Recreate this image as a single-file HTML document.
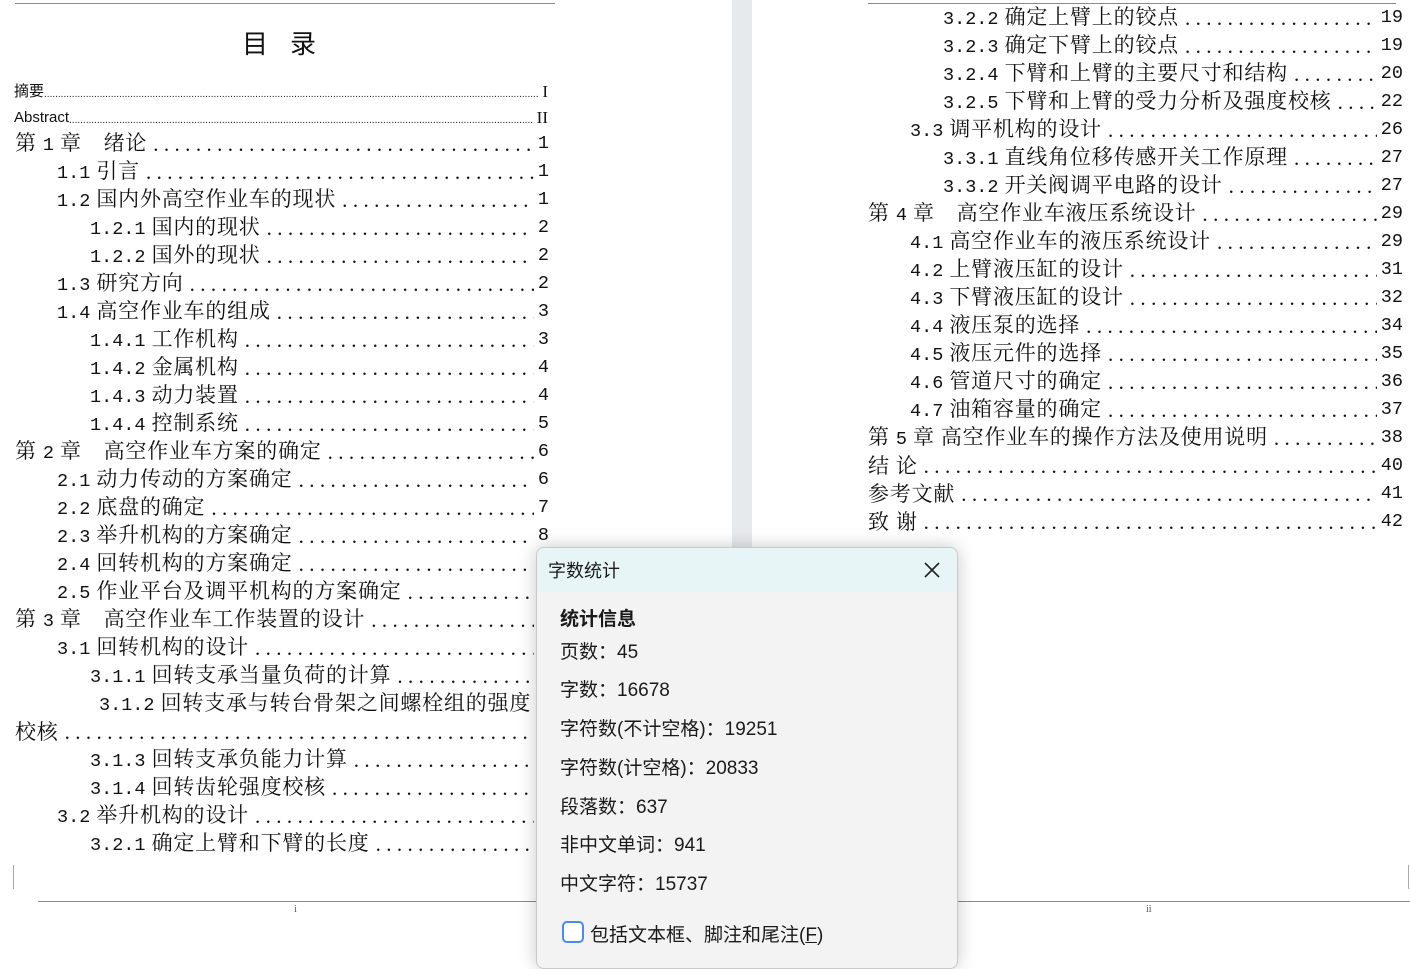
<!DOCTYPE html>
<html><head><meta charset="utf-8">
<style>
html,body{margin:0;padding:0}
body{width:1410px;height:957px;position:relative;overflow:hidden;background:#fff;font-family:"Liberation Serif","Noto Serif CJK SC",serif;color:#111}
.gut{position:absolute;left:732px;top:0;width:20px;height:957px;background:#e7eaed}
.hl{position:absolute;height:1px;background:#8a8a8a}
.r{position:absolute;display:flex;align-items:center;height:28px;font-size:21px;letter-spacing:0.8px;white-space:nowrap;line-height:28px}
.r .d{flex:1;overflow:hidden;letter-spacing:5.4px;padding-left:6px}
.r .n{padding-left:4px;letter-spacing:0;font-family:"Liberation Mono",monospace;font-size:18.5px}
.m{font-family:"Liberation Mono",monospace;font-size:18.5px;letter-spacing:0}
.s{font-family:"Liberation Sans","Noto Sans CJK SC",sans-serif;font-size:15px;letter-spacing:0}
.s .d{letter-spacing:0;font-size:10px;padding-left:0;align-self:flex-end;line-height:22px}
.s .n{font-family:"Liberation Serif",serif;font-size:17px}
.dlg{position:absolute;left:536px;top:547px;width:420px;height:420px;background:#f3f3f3;border:1px solid #c9c9c9;border-radius:8px;box-shadow:0 0 18px rgba(0,0,0,.22);font-family:"Liberation Sans","Noto Sans CJK SC",sans-serif;overflow:hidden}
.hd{height:44px;background:#e8f5f7;position:relative}
.hd span{position:absolute;left:11px;top:9px;font-size:18px;color:#1a1a1a}
.x{position:absolute;left:384px;top:11px;width:22px;height:22px}
.it{position:absolute;left:23px;font-size:19px;color:#1a1a1a}
.cb{position:absolute;left:25px;top:373px;width:18px;height:18px;border:2px solid #4a8af0;border-radius:5px;background:#fff}
</style></head><body>
<div class="gut"></div>
<div class="hl" style="left:15px;top:3px;width:540px"></div>
<div class="hl" style="left:868px;top:3px;width:528px"></div>
<div class="hl" style="left:38px;top:901px;width:498px"></div>
<div class="hl" style="left:958px;top:901px;width:452px"></div>
<div style="position:absolute;left:13px;top:865px;width:1px;height:24px;background:#aaa"></div>
<div style="position:absolute;left:1408px;top:865px;width:1px;height:24px;background:#aaa"></div>
<div style="position:absolute;left:294px;top:904px;font-size:10px;color:#555">i</div>
<div style="position:absolute;left:1146px;top:904px;font-size:10px;color:#555">ii</div>
<div style="position:absolute;left:242px;top:24px;font-size:26px;font-family:'Noto Sans CJK SC',sans-serif;letter-spacing:22px">目录</div>

<div class="r s" style="left:14px;width:534px;top:78px"><span>摘要</span><span class="d">..................................................................................................................................................................................</span><span class="n">I</span></div>
<div class="r s" style="left:14px;width:534px;top:104px"><span>Abstract</span><span class="d">..................................................................................................................................................................................</span><span class="n">II</span></div>

<div class="r" style="left:15px;width:534px;top:130px"><span>第 <span class="m">1</span> 章　绪论</span><span class="d">..............................................................</span><span class="n">1</span></div>
<div class="r" style="left:57px;width:492px;top:158px"><span><span class="m">1.1</span> 引言</span><span class="d">..............................................................</span><span class="n">1</span></div>
<div class="r" style="left:57px;width:492px;top:186px"><span><span class="m">1.2</span> 国内外高空作业车的现状</span><span class="d">..............................................................</span><span class="n">1</span></div>
<div class="r" style="left:90px;width:459px;top:214px"><span><span class="m">1.2.1</span> 国内的现状</span><span class="d">..............................................................</span><span class="n">2</span></div>
<div class="r" style="left:90px;width:459px;top:242px"><span><span class="m">1.2.2</span> 国外的现状</span><span class="d">..............................................................</span><span class="n">2</span></div>
<div class="r" style="left:57px;width:492px;top:270px"><span><span class="m">1.3</span> 研究方向</span><span class="d">..............................................................</span><span class="n">2</span></div>
<div class="r" style="left:57px;width:492px;top:298px"><span><span class="m">1.4</span> 高空作业车的组成</span><span class="d">..............................................................</span><span class="n">3</span></div>
<div class="r" style="left:90px;width:459px;top:326px"><span><span class="m">1.4.1</span> 工作机构</span><span class="d">..............................................................</span><span class="n">3</span></div>
<div class="r" style="left:90px;width:459px;top:354px"><span><span class="m">1.4.2</span> 金属机构</span><span class="d">..............................................................</span><span class="n">4</span></div>
<div class="r" style="left:90px;width:459px;top:382px"><span><span class="m">1.4.3</span> 动力装置</span><span class="d">..............................................................</span><span class="n">4</span></div>
<div class="r" style="left:90px;width:459px;top:410px"><span><span class="m">1.4.4</span> 控制系统</span><span class="d">..............................................................</span><span class="n">5</span></div>
<div class="r" style="left:15px;width:534px;top:438px"><span>第 <span class="m">2</span> 章　高空作业车方案的确定</span><span class="d">..............................................................</span><span class="n">6</span></div>
<div class="r" style="left:57px;width:492px;top:466px"><span><span class="m">2.1</span> 动力传动的方案确定</span><span class="d">..............................................................</span><span class="n">6</span></div>
<div class="r" style="left:57px;width:492px;top:494px"><span><span class="m">2.2</span> 底盘的确定</span><span class="d">..............................................................</span><span class="n">7</span></div>
<div class="r" style="left:57px;width:492px;top:522px"><span><span class="m">2.3</span> 举升机构的方案确定</span><span class="d">..............................................................</span><span class="n">8</span></div>
<div class="r" style="left:57px;width:492px;top:550px"><span><span class="m">2.4</span> 回转机构的方案确定</span><span class="d">..............................................................</span><span class="n">8</span></div>
<div class="r" style="left:57px;width:492px;top:578px"><span><span class="m">2.5</span> 作业平台及调平机构的方案确定</span><span class="d">..............................................................</span><span class="n">9</span></div>
<div class="r" style="left:15px;width:534px;top:606px"><span>第 <span class="m">3</span> 章　高空作业车工作装置的设计</span><span class="d">..............................................................</span><span class="n">1</span></div>
<div class="r" style="left:57px;width:492px;top:634px"><span><span class="m">3.1</span> 回转机构的设计</span><span class="d">..............................................................</span><span class="n">1</span></div>
<div class="r" style="left:90px;width:459px;top:662px"><span><span class="m">3.1.1</span> 回转支承当量负荷的计算</span><span class="d">..............................................................</span><span class="n">1</span></div>
<div class="r" style="left:99px;width:450px;top:690px"><span><span class="m">3.1.2</span> 回转支承与转台骨架之间螺栓组的强度</span></div>
<div class="r" style="left:15px;width:534px;top:718px"><span>校核</span><span class="d">..............................................................</span><span class="n">1</span></div>
<div class="r" style="left:90px;width:459px;top:746px"><span><span class="m">3.1.3</span> 回转支承负能力计算</span><span class="d">..............................................................</span><span class="n">1</span></div>
<div class="r" style="left:90px;width:459px;top:774px"><span><span class="m">3.1.4</span> 回转齿轮强度校核</span><span class="d">..............................................................</span><span class="n">1</span></div>
<div class="r" style="left:57px;width:492px;top:802px"><span><span class="m">3.2</span> 举升机构的设计</span><span class="d">..............................................................</span><span class="n">1</span></div>
<div class="r" style="left:90px;width:459px;top:830px"><span><span class="m">3.2.1</span> 确定上臂和下臂的长度</span><span class="d">..............................................................</span><span class="n">1</span></div>

<div class="r" style="left:943px;width:460px;top:4px"><span><span class="m">3.2.2</span> 确定上臂上的铰点</span><span class="d">..............................................................</span><span class="n">19</span></div>
<div class="r" style="left:943px;width:460px;top:32px"><span><span class="m">3.2.3</span> 确定下臂上的铰点</span><span class="d">..............................................................</span><span class="n">19</span></div>
<div class="r" style="left:943px;width:460px;top:60px"><span><span class="m">3.2.4</span> 下臂和上臂的主要尺寸和结构</span><span class="d">..............................................................</span><span class="n">20</span></div>
<div class="r" style="left:943px;width:460px;top:88px"><span><span class="m">3.2.5</span> 下臂和上臂的受力分析及强度校核</span><span class="d">..............................................................</span><span class="n">22</span></div>
<div class="r" style="left:910px;width:493px;top:116px"><span><span class="m">3.3</span> 调平机构的设计</span><span class="d">..............................................................</span><span class="n">26</span></div>
<div class="r" style="left:943px;width:460px;top:144px"><span><span class="m">3.3.1</span> 直线角位移传感开关工作原理</span><span class="d">..............................................................</span><span class="n">27</span></div>
<div class="r" style="left:943px;width:460px;top:172px"><span><span class="m">3.3.2</span> 开关阀调平电路的设计</span><span class="d">..............................................................</span><span class="n">27</span></div>
<div class="r" style="left:868px;width:535px;top:200px"><span>第 <span class="m">4</span> 章　高空作业车液压系统设计</span><span class="d">..............................................................</span><span class="n">29</span></div>
<div class="r" style="left:910px;width:493px;top:228px"><span><span class="m">4.1</span> 高空作业车的液压系统设计</span><span class="d">..............................................................</span><span class="n">29</span></div>
<div class="r" style="left:910px;width:493px;top:256px"><span><span class="m">4.2</span> 上臂液压缸的设计</span><span class="d">..............................................................</span><span class="n">31</span></div>
<div class="r" style="left:910px;width:493px;top:284px"><span><span class="m">4.3</span> 下臂液压缸的设计</span><span class="d">..............................................................</span><span class="n">32</span></div>
<div class="r" style="left:910px;width:493px;top:312px"><span><span class="m">4.4</span> 液压泵的选择</span><span class="d">..............................................................</span><span class="n">34</span></div>
<div class="r" style="left:910px;width:493px;top:340px"><span><span class="m">4.5</span> 液压元件的选择</span><span class="d">..............................................................</span><span class="n">35</span></div>
<div class="r" style="left:910px;width:493px;top:368px"><span><span class="m">4.6</span> 管道尺寸的确定</span><span class="d">..............................................................</span><span class="n">36</span></div>
<div class="r" style="left:910px;width:493px;top:396px"><span><span class="m">4.7</span> 油箱容量的确定</span><span class="d">..............................................................</span><span class="n">37</span></div>
<div class="r" style="left:868px;width:535px;top:424px"><span>第 <span class="m">5</span> 章 高空作业车的操作方法及使用说明</span><span class="d">..............................................................</span><span class="n">38</span></div>
<div class="r" style="left:868px;width:535px;top:452px"><span>结 论</span><span class="d">..............................................................</span><span class="n">40</span></div>
<div class="r" style="left:868px;width:535px;top:480px"><span>参考文献</span><span class="d">..............................................................</span><span class="n">41</span></div>
<div class="r" style="left:868px;width:535px;top:508px"><span>致 谢</span><span class="d">..............................................................</span><span class="n">42</span></div>

<div class="dlg">
 <div class="hd"><span>字数统计</span>
  <svg class="x" viewBox="0 0 22 22"><path d="M4 4L18 18M18 4L4 18" stroke="#222" stroke-width="1.6"/></svg></div>
 <div class="it" style="top:56px;font-weight:bold">统计信息</div>
 <div class="it" style="top:89px">页数：45</div>
 <div class="it" style="top:127px">字数：16678</div>
 <div class="it" style="top:166px">字符数(不计空格)：19251</div>
 <div class="it" style="top:205px">字符数(计空格)：20833</div>
 <div class="it" style="top:244px">段落数：637</div>
 <div class="it" style="top:282px">非中文单词：941</div>
 <div class="it" style="top:321px">中文字符：15737</div>
 <div class="cb"></div>
 <div class="it" style="top:372px;left:53px">包括文本框、脚注和尾注(<u>F</u>)</div>
</div>
</body></html>
